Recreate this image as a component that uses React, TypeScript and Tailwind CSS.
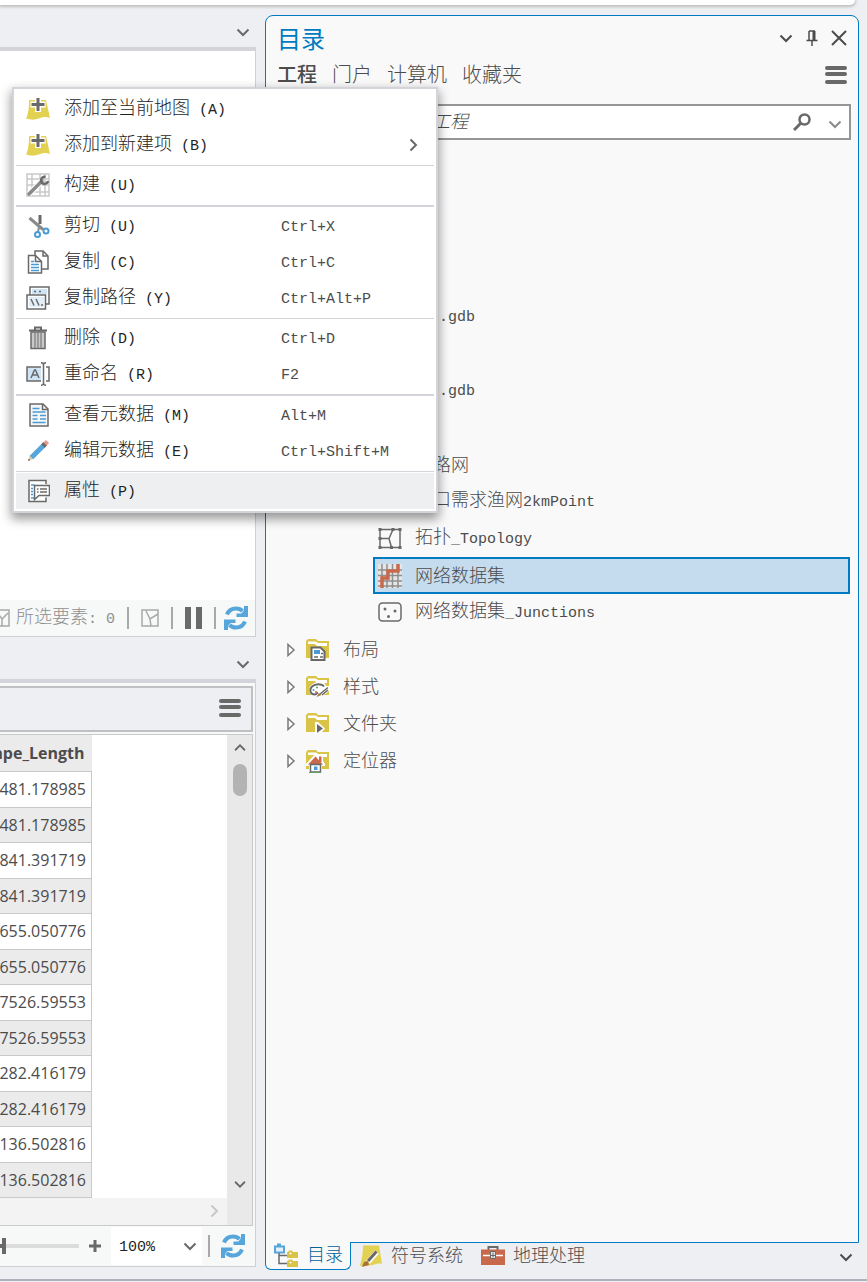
import React from 'react';

const CJK = "font-['Liberation_Sans','Noto_Sans_CJK_SC',sans-serif]";

// Latin runs are set in a half-width mono so they line up with the CJK grid
const Mixed: React.FC<{ text: string }> = ({ text }) => (
  <span className="whitespace-pre">
    {text.split(/([\x20-\x7e]+)/).map((part, i) =>
      i % 2 === 1 ? (
        <span key={i} className="font-['Liberation_Mono',monospace] text-[15px]">
          {part}
        </span>
      ) : (
        part
      )
    )}
  </span>
);

const Chevron: React.FC<{ className?: string }> = ({ className = '' }) => (
  <svg width="14" height="14" viewBox="0 0 14 14" fill="none" stroke="currentColor" strokeWidth="2" className={className}>
    <path d="M1.500 4.500 7 10l5.500-5.500" />
  </svg>
);

const Hamburger = () => (
  <svg width="22" height="20" viewBox="0 0 22 20" fill="#696969">
    <rect y="1" width="22" height="4" rx="2" />
    <rect y="7" width="22" height="4" rx="2" />
    <rect y="15" width="22" height="4" rx="2" />
  </svg>
);

const Refresh = () => (
  <svg width="24" height="24" viewBox="0 0 24 24">
    <path d="M3 8.500C5 3.500 9 2.500 12 2.500c3.500 0 5.500 1.500 6.500 2.500" fill="none" stroke="#56a5db" strokeWidth="4" />
    <path d="M24 0v11H12.500V7.500h5L20 4V0z" fill="#56a5db" />
    <path d="M21 15.500c-2 5-6 6-9 6-3.500 0-5.500-1.500-6.500-2.500" fill="none" stroke="#56a5db" strokeWidth="4" />
    <path d="M0 24V13.500h11.500V17h-5L4 20v4z" fill="#56a5db" />
  </svg>
);

const Ico: React.FC<{ children: React.ReactNode }> = ({ children }) => (
  <svg width="24" height="24" viewBox="0 0 24 24" fill="none" className="shrink-0">
    {children}
  </svg>
);

const AddMapIcon = () => (
  <Ico>
    <path d="M3 3h17l4 18c-4-1.500-7-1-11 .5S4 23 0 21.500C2.500 17 3 10 3 3z" fill="#e3d152" />
    <path d="M9 0h6v4.500h4.500v6H15V15H9v-4.500H4.500v-6H9z" fill="#fff" />
    <path d="M10.500 1h3v5h5v3h-5v5h-3V9h-5V6h5z" fill="#696969" />
  </Ico>
);

const BuildIcon = () => (
  <Ico>
    <path d="M1 1h22v22H1zM6 1v22M14 1v22M19 1v22M1 6h22M1 12h22M1 19h22" stroke="#c9c9c9" strokeWidth="1.500" />
    <path d="M3 21 16 8" stroke="#fff" strokeWidth="6" />
    <path d="M3 21 16 8" stroke="#8a8a8a" strokeWidth="3.500" strokeLinecap="round" />
    <path d="M19.500 4a3.500 3.500 0 1 0 2.500 4" stroke="#696969" strokeWidth="2.500" />
  </Ico>
);

const CutIcon = () => (
  <Ico>
    <path d="M3.500 4 17 15.500" stroke="#8a8a8a" strokeWidth="3" />
    <path d="M14 1v9" stroke="#696969" strokeWidth="3" />
    <path d="m13 13-1 5" stroke="#8a8a8a" strokeWidth="2" />
    <circle cx="11.500" cy="20.500" r="2.500" stroke="#4a9bd5" strokeWidth="2" />
    <circle cx="20" cy="17" r="2.500" stroke="#4a9bd5" strokeWidth="2" />
  </Ico>
);

const CopyIcon = () => (
  <Ico>
    <path d="M9 1h8l5 5v13H9z" fill="#fff" stroke="#696969" strokeWidth="1.500" />
    <path d="M17 1v5h5" stroke="#696969" strokeWidth="1.500" />
    <path d="M2.500 5.500h7l6 6V23h-13z" fill="#fff" stroke="#696969" strokeWidth="1.500" />
    <path d="M9.500 5.500v6h6" stroke="#696969" strokeWidth="1.500" />
    <path d="M5 11.500h3M5 14.500h8M5 17.500h8M5 20.500h8" stroke="#4a9bd5" strokeWidth="1.500" />
  </Ico>
);

const CopyPathIcon = () => (
  <Ico>
    <path d="M4 1h19v17H4z" fill="#fff" stroke="#696969" strokeWidth="1.500" />
    <path d="M6 3h15v5H6z" fill="#cfe5f5" />
    <path d="M8 5.500h2M13 5.500h2" stroke="#696969" strokeWidth="1.500" />
    <path d="M1 9h18.500v14H1z" fill="#fff" stroke="#696969" strokeWidth="1.500" />
    <path d="M3 11h15v10H3z" fill="#e0eff9" />
    <path d="m5 13 3 6.500M10 13l3 6.500M15 19h2" stroke="#696969" strokeWidth="1.500" />
  </Ico>
);

const DeleteIcon = () => (
  <Ico>
    <path d="M3 4.500h18M9 4V1.500h6V4" stroke="#696969" strokeWidth="2" />
    <path d="M5 6h14v16.500H5z" fill="#c9c9c9" stroke="#696969" strokeWidth="1.500" />
    <path d="M9 7v15M12 7v15M15 7v15" stroke="#8a8a8a" strokeWidth="1.500" />
  </Ico>
);

const RenameIcon = () => (
  <Ico>
    <path d="M15 5H1v14h14" fill="#cfe5f5" stroke="#696969" strokeWidth="1.500" />
    <path d="m5 16 3.500-8h1l3.500 8M6 13h6" stroke="#696969" strokeWidth="1.500" />
    <path d="M20 5h3v14h-3" stroke="#696969" strokeWidth="1.500" />
    <path d="M15 .7c2 0 2.500.8 2.500 2 0-1.200.5-2 2.500-2M17.500 2v20M15 23.300c2 0 2.500-.8 2.500-2 0 1.200.5 2 2.500 2" stroke="#696969" strokeWidth="1.500" />
  </Ico>
);

const MetadataIcon = () => (
  <Ico>
    <path d="M4 1h13l5 5v17H4z" fill="#f6f6f6" stroke="#696969" strokeWidth="1.500" />
    <path d="M16.500 1v5.500H22" stroke="#696969" strokeWidth="1.500" />
    <path d="M6.500 5.500h7M6.500 9h13M6.500 12.500h5M14 12.500h6M6.500 16h5M14 16h6M6.500 19.500h13" stroke="#4a9bd5" strokeWidth="1.500" />
  </Ico>
);

const EditIcon = () => (
  <Ico>
    <path d="m2 22 2-6 3.500 4z" fill="#e0cba8" />
    <path d="m2 22 .8-2.500 1.500 1.700z" fill="#696969" />
    <path d="M5.500 18.500 18 6" stroke="#56a5db" strokeWidth="5" />
    <path d="m17 7 2.500-2.500" stroke="#696969" strokeWidth="5" />
    <path d="m19 5 2.500-2.500" stroke="#e49a8c" strokeWidth="4.500" />
  </Ico>
);

const PropertiesIcon = () => (
  <Ico>
    <path d="M20 5V1.500H3v21h17v-4" fill="#fff" stroke="#696969" strokeWidth="1.500" />
    <path d="M5 6h3.500M5 9.500h2M5 12.500h2M5 15.500h2M5 19h4" stroke="#4a9bd5" strokeWidth="1.500" />
    <path d="M8.500 6.500h15v10H13l-4.500 4z" fill="#fff" stroke="#696969" strokeWidth="1.500" />
    <path d="M11 10h1.500M14 10h7M11 13h1.500M14 13h7" stroke="#696969" strokeWidth="1.500" />
  </Ico>
);

const TopologyIcon = () => (
  <Ico>
    <path d="M2 2.500h20v18H2zM2 11.500h9l4-9M11 11.500l2.500 9" stroke="#696969" strokeWidth="1.500" />
    <path d="M.5 1h3v3h-3zM13.500 1h3v3h-3zM20.500 1h3v3h-3zM.5 19h3v3h-3zM12 19h3v3h-3zM20.500 19h3v3h-3zM.5 10h3v3h-3z" fill="#696969" />
  </Ico>
);

const NetworkIcon = () => (
  <Ico>
    <path d="M0 0h24v24H0z" fill="#e6e6e6" />
    <path d="M4 0v24M9 0v24M14.500 0v24M20 0v24M0 6h24M0 11.500h24M0 17h24M0 22h24" stroke="#8f8f8f" strokeWidth="1.500" />
    <path d="M4 24V14h6V7h10V0" stroke="#c9694c" strokeWidth="3.500" />
  </Ico>
);

const JunctionsIcon = () => (
  <Ico>
    <rect x="1" y="2" width="22" height="18" rx="3.500" stroke="#696969" strokeWidth="1.500" />
    <circle cx="7" cy="8" r="1.500" fill="#696969" />
    <circle cx="17" cy="10" r="1.500" fill="#696969" />
    <circle cx="10.500" cy="15.500" r="1.500" fill="#696969" />
  </Ico>
);

const FolderIcon: React.FC<{ children?: React.ReactNode }> = ({ children }) => (
  <Ico>
    <path d="M0 20V3l2-2h8l2 2h11v17z" fill="#d9c447" />
    <path d="M2 6V3.500h8L12 5h9v3H11L9 6z" fill="#fff" />
    {children}
  </Ico>
);

const LayoutFolderIcon = () => (
  <FolderIcon>
    <path d="M5.500 9.500h9l4 4V22h-13z" fill="#fff" stroke="#696969" strokeWidth="2" />
    <path d="M8 12h6v4H8z" fill="#4a9bd5" />
    <path d="M15 15.500h2M8 19h4M14 19h3" stroke="#696969" strokeWidth="1.500" />
  </FolderIcon>
);

const StyleFolderIcon = () => (
  <FolderIcon>
    <path d="M4 15c0-4 4-7 9-7 4 0 6 2 6 4h5c0 3-6 7-9 8-5 1-11 0-11-5z" fill="#fff" stroke="#fff" strokeWidth="2" />
    <path d="M18 11.500c-2-3-9-3-12 0-3 3-2 8 3 8 2 0 2-1.500 3-2" stroke="#696969" strokeWidth="1.800" />
    <circle cx="7.500" cy="15" r="1" fill="#4a9bd5" />
    <circle cx="11" cy="12.500" r="1" fill="#5aa469" />
    <circle cx="10" cy="17" r="1" fill="#c9694c" />
    <path d="m14 19 8-6.500M16 20l6-5" stroke="#696969" strokeWidth="1.500" />
    <path d="m10.500 22 2.500-4 2.500 2z" fill="#a9713d" />
  </FolderIcon>
);

const FilesFolderIcon = () => (
  <FolderIcon>
    <path d="M9 10h3l7 6.500-5 5.500H9z" fill="#fff" />
    <path d="M11 12v9l6-4.500z" fill="#696969" />
  </FolderIcon>
);

const LocatorFolderIcon = () => (
  <FolderIcon>
    <path d="M10 4 0 15v2h3v7h13v-7h3v-2l-2-3V6h-4v1z" fill="#fff" />
    <path d="M13 7.500h2.500V13H13z" fill="#c9694c" />
    <path d="M9.500 7.500 2 15.500h15z" fill="#c9694c" />
    <path d="M4.500 15.500h10V23h-10z" fill="#fff" stroke="#696969" strokeWidth="1.500" />
    <path d="M8 17.500h3.500V21H8z" fill="#4a9bd5" />
    <path d="M3 23.500h12" stroke="#5aa469" />
  </FolderIcon>
);

const CatalogTabIcon = () => (
  <Ico>
    <path d="M0 2.500h3V.500h4v2h4v8H0z" fill="#56a5db" />
    <path d="M2 4.500h7v4H2z" fill="#e4f1fa" />
    <path d="M5 10v10.500h8M5 12.500h8" stroke="#696969" strokeWidth="1.500" />
    <path d="M13 9h1l1-1.500h3l1 1.500h5v6H13zM13 18h1l1-1.500h3l1 1.500h5v6H13z" fill="#d9c447" />
    <circle cx="16.500" cy="10.500" r="1" fill="#fff" />
    <circle cx="16.500" cy="19.500" r="1" fill="#fff" />
  </Ico>
);

const SymbologyTabIcon = () => (
  <Ico>
    <path d="M4 1.500h16L23 20c-5-1.500-8 1.500-12 1.500S4 23 1 21.500c2-6 3-13 3-20z" fill="#e3d152" />
    <path d="m9 18 9-10" stroke="#fff" strokeWidth="5" />
    <path d="m9 17 8.500-9.500" stroke="#696969" strokeWidth="3" />
    <path d="m3 23 2-5 4-1 1 4z" fill="#a9713d" />
  </Ico>
);

const GeoprocessingTabIcon = () => (
  <Ico>
    <path d="M7.500 6V3h9v3" stroke="#696969" strokeWidth="2" />
    <path d="M0 5.500h24V21H0z" fill="#c9694c" />
    <path d="M2 11.500h20" stroke="#fff" strokeWidth="1.500" />
    <path d="M9.500 7.500h5v7h-5z" fill="#e6e6e6" stroke="#696969" />
    <path d="M12 8.500v5M10 11.500h4" stroke="#696969" />
  </Ico>
);

interface MenuEntry {
  label: string;
  icon: React.FC;
  shortcut?: string;
  submenu?: boolean;
  active?: boolean;
}

const menuGroups: MenuEntry[][] = [
  [
    { label: '添加至当前地图 (A)', icon: AddMapIcon },
    { label: '添加到新建项 (B)', icon: AddMapIcon, submenu: true },
  ],
  [{ label: '构建 (U)', icon: BuildIcon }],
  [
    { label: '剪切 (U)', icon: CutIcon, shortcut: 'Ctrl+X' },
    { label: '复制 (C)', icon: CopyIcon, shortcut: 'Ctrl+C' },
    { label: '复制路径 (Y)', icon: CopyPathIcon, shortcut: 'Ctrl+Alt+P' },
  ],
  [
    { label: '删除 (D)', icon: DeleteIcon, shortcut: 'Ctrl+D' },
    { label: '重命名 (R)', icon: RenameIcon, shortcut: 'F2' },
  ],
  [
    { label: '查看元数据 (M)', icon: MetadataIcon, shortcut: 'Alt+M' },
    { label: '编辑元数据 (E)', icon: EditIcon, shortcut: 'Ctrl+Shift+M' },
  ],
  [{ label: '属性 (P)', icon: PropertiesIcon, active: true }],
];

const ContextMenu = () => (
  <div
    role="menu"
    className="absolute left-3 top-[87px] z-10 w-[426px] border-2 border-[#d3d4da] bg-white p-[2px] text-[#1f1f1f] shadow-[0_5px_10px_1px_rgba(0,0,0,0.4)]"
  >
    {menuGroups.map((group, g) => (
      <React.Fragment key={g}>
        {g > 0 && <hr className={`mt-[2px] mb-px border-0 bg-[#d3d4da] ${g === 2 || g === 4 ? 'h-[2px]' : 'h-px'}`} />}
        {group.map((item) => (
          <button
            key={item.label}
            role="menuitem"
            className={`flex h-9 w-full items-center pl-[10px] pr-[14px] text-left ${item.active ? 'bg-[#eeeff1]' : ''}`}
          >
            <item.icon />
            <span className="ml-[14px] w-[217px]">
              <Mixed text={item.label} />
            </span>
            {item.shortcut && (
              <span className="text-[#4c4c4c]">
                <Mixed text={item.shortcut} />
              </span>
            )}
            {item.submenu && <Chevron className="ml-auto -rotate-90 text-[#696969]" />}
          </button>
        ))}
      </React.Fragment>
    ))}
  </div>
);

const Divider = () => <span className="h-[22px] w-[2px] shrink-0 bg-[#a8a8a8]" />;

const PaneHeader = () => (
  <div className="flex h-[46px] items-center justify-end border-b-4 border-[#d3d4da] pr-[6px] pt-3">
    <button aria-label="窗格选项" className="text-[#696969]">
      <Chevron />
    </button>
  </div>
);

const MapPane = () => (
  <section>
    <PaneHeader />
    <div className="h-[549px] border-r border-[#cfd0d4] bg-white" />
    <div className="flex h-[37px] items-center justify-end gap-3 border-b border-r border-[#cfd0d4] bg-[#f7f8f8] pr-[7px]">
      <div className="flex shrink-0 items-center gap-[6px] text-[#8f8f8f]">
        <svg width="18" height="18" viewBox="0 0 18 18" fill="none" stroke="#a8a8a8" strokeWidth="1.500">
          <path d="M1 1h16v16H1zM4 2l6 8 6-6M10 10v7" />
        </svg>
        <Mixed text="所选要素: 0" />
      </div>
      <Divider />
      <button aria-label="选择" className="shrink-0">
        <svg width="18" height="18" viewBox="0 0 18 18" fill="none" stroke="#a8a8a8" strokeWidth="1.500">
          <path d="M1 1h16v16H1zM5 2l4 8 8-5M9 10l1 7" />
        </svg>
      </button>
      <Divider />
      <button aria-label="暂停" className="flex shrink-0 gap-[5px]">
        <span className="h-[22px] w-[6px] bg-[#696969]" />
        <span className="h-[22px] w-[6px] bg-[#696969]" />
      </button>
      <Divider />
      <button aria-label="刷新" className="-ml-1 shrink-0">
        <Refresh />
      </button>
    </div>
  </section>
);

const lengths = [
  '7481.178985',
  '7481.178985',
  '3841.391719',
  '3841.391719',
  '7655.050776',
  '7655.050776',
  '57526.59553',
  '57526.59553',
  '1282.416179',
  '1282.416179',
  '5136.502816',
  '5136.502816',
];

const TablePane = () => (
  <section>
    <PaneHeader />
    <div className="border-b border-r border-[#cfd0d4] bg-[#f7f8f8] pt-[3px]">
      <div className="mr-[2px] flex h-[46px] items-center justify-end border-y-2 border-r-2 border-[#c0c0c3] bg-[#eeeff2] pb-[2px] pr-[10px]">
        <button aria-label="菜单">
          <Hamburger />
        </button>
      </div>
      <div className="mr-[2px] mt-[2px] flex border-y border-r border-[#c9c9cb] bg-white">
        <div className="flex-1">
          <div className="flex w-[92px] justify-end overflow-hidden">
            <table className="w-[150px] shrink-0 border-collapse text-right font-['Open_Sans',sans-serif] text-[16px] font-normal text-[#4c4c4c]">
              <thead>
                <tr className="h-[36px] bg-[#ebebeb]">
                  <th className="py-0 pl-0 pr-[7px] font-bold">Shape_Length</th>
                </tr>
              </thead>
              <tbody>
                {lengths.map((value, i) => (
                  <tr key={i} className={i % 2 ? 'h-[35px] bg-[#ebebeb]' : 'h-[36px] bg-white'}>
                    <td className="border-y border-r border-[#c9c9cb] py-0 pl-0 pr-[5px]">{value}</td>
                  </tr>
                ))}
              </tbody>
            </table>
          </div>
          <div className="flex h-[27px] items-center justify-end bg-[#f3f3f3] pr-[6px] text-[#c8c8c8]">
            <Chevron className="-rotate-90" />
          </div>
        </div>
        <div className="flex w-[25px] flex-col items-center bg-[#e9e9e9] pt-[6px] pb-[34px] text-[#696969]">
          <Chevron className="rotate-180 scale-90" />
          <span className="mt-[9px] h-8 w-[14px] rounded-full bg-[#b3b3b3]" />
          <Chevron className="mt-auto scale-90" />
        </div>
      </div>
      <div className="flex h-10 items-center">
        <input
          type="range"
          aria-label="缩放"
          defaultValue={3}
          className="h-1 w-[79px] appearance-none bg-[linear-gradient(to_right,#696969_3px,#dcdcdc_3px)] [&::-webkit-slider-thumb]:h-4 [&::-webkit-slider-thumb]:w-1 [&::-webkit-slider-thumb]:appearance-none [&::-webkit-slider-thumb]:bg-[#696969]"
        />
        <button aria-label="放大" className="ml-[10px]">
          <svg width="12" height="12" viewBox="0 0 12 12" stroke="#696969" strokeWidth="3">
            <path d="M6 0v12M0 6h12" />
          </svg>
        </button>
        <div className="relative ml-[10px] h-[38px] w-[91px] bg-white">
          <select
            aria-label="缩放比例"
            className="h-full w-full appearance-none pl-2 pt-1 font-['Liberation_Mono',monospace] text-[15px] text-[#1f1f1f]"
          >
            <option>100%</option>
          </select>
          <Chevron className="pointer-events-none absolute right-[5px] top-3 text-[#696969]" />
        </div>
        <div className="ml-[6px] flex items-center gap-[11px]">
          <Divider />
          <button aria-label="刷新">
            <Refresh />
          </button>
        </div>
      </div>
    </div>
  </section>
);

interface TreeItem {
  label: string;
  icon?: React.FC;
  indent: string;
  expandable?: boolean;
  selected?: boolean;
}

const treeItems: TreeItem[] = [
  { label: '.gdb', indent: 'pl-[173px]' },
  { label: '', indent: '' },
  { label: '.gdb', indent: 'pl-[173px]' },
  { label: '', indent: '' },
  { label: '路网', indent: 'pl-[167px]' },
  { label: '口需求渔网2kmPoint', indent: 'pl-[167px]' },
  { label: '拓扑_Topology', icon: TopologyIcon, indent: 'pl-[112px]' },
  { label: '网络数据集', icon: NetworkIcon, indent: 'pl-[3px]', selected: true },
  { label: '网络数据集_Junctions', icon: JunctionsIcon, indent: 'pl-[112px]' },
  { label: '布局', icon: LayoutFolderIcon, indent: 'pl-5', expandable: true },
  { label: '样式', icon: StyleFolderIcon, indent: 'pl-5', expandable: true },
  { label: '文件夹', icon: FilesFolderIcon, indent: 'pl-5', expandable: true },
  { label: '定位器', icon: LocatorFolderIcon, indent: 'pl-5', expandable: true },
];

const CatalogTree = () => (
  <ul role="tree" className="mt-[158px] pr-2 text-[#4c4c4c]">
    {treeItems.map((item, i) => (
      <li
        key={i}
        role="treeitem"
        aria-selected={!!item.selected}
        className={`flex h-[37px] items-center ${item.indent} ${
          item.selected ? 'ml-[107px] border-2 border-[#007ac2] bg-[#c5dbee]' : ''
        }`}
      >
        {item.expandable && (
          <svg width="10" height="14" viewBox="0 0 10 14" fill="#fff" stroke="#7a7a7a" strokeWidth="1.500" className="mr-[10px]">
            <path d="M2 1.500v11L8 7z" />
          </svg>
        )}
        {item.icon && (
          <span className="mr-[13px]">
            <item.icon />
          </span>
        )}
        <Mixed text={item.label} />
      </li>
    ))}
  </ul>
);

const CatalogPanel = () => (
  <section className="flex flex-1 flex-col pl-[9px] pr-2 pt-[10px]">
    <div className="flex-1 rounded-t-lg border border-[#007ac2] bg-[#f9f9f9]">
      <div className="flex h-11 items-center justify-between pl-[11px] pr-[11px]">
        <h1 className="pt-1 text-[24px] font-normal text-[#007ac2]">目录</h1>
        <div className="flex items-center gap-3 text-[#4c4c4c]">
          <button aria-label="选项">
            <Chevron />
          </button>
          <button aria-label="固定">
            <svg width="14" height="16" viewBox="0 0 14 16" fill="none" stroke="currentColor" strokeWidth="1.500">
              <path d="M4 1v9M4 1h6M1.500 10.500h11M7 10.500V16" />
              <path d="M9 1v9" strokeWidth="3" />
            </svg>
          </button>
          <button aria-label="关闭">
            <svg width="16" height="16" viewBox="0 0 16 16" stroke="currentColor" strokeWidth="2">
              <path d="m1 1 14 14M15 1 1 15" />
            </svg>
          </button>
        </div>
      </div>
      <div className="flex h-[30px] items-center justify-between pl-[11px] pr-[11px]">
        <nav className="flex gap-[15px] text-[20px] text-[#4c4c4c]">
          <button className="font-medium">工程</button>
          <button>门户</button>
          <button>计算机</button>
          <button>收藏夹</button>
        </nav>
        <button aria-label="菜单">
          <Hamburger />
        </button>
      </div>
      <div className="ml-[117px] mr-[7px] mt-[14px] flex h-9 items-center border-2 border-[#969696] bg-white pr-[7px]">
        <input
          type="text"
          aria-label="搜索工程"
          placeholder="搜索 工程"
          className="min-w-0 flex-1 pl-[6px] italic outline-none placeholder:text-[#4c4c4c]"
        />
        <button aria-label="搜索" className="mr-[17px]">
          <svg width="18" height="18" viewBox="0 0 18 18" fill="none" stroke="#696969">
            <circle cx="11.500" cy="6.500" r="5" strokeWidth="2.500" />
            <path d="m8 10-7 7" strokeWidth="3" />
          </svg>
        </button>
        <button aria-label="搜索选项" className="pt-1 text-[#8a8a8a]">
          <Chevron />
        </button>
      </div>
      <CatalogTree />
    </div>
    <div className="flex h-[27px] items-center text-[#4c4c4c]">
      <button className="-mt-px flex h-7 items-center gap-[9px] self-start rounded-b-md border border-t-0 border-[#007ac2] bg-[#f9f9f9] pb-[2px] pl-2 pr-[7px] text-[#00619b]">
        <CatalogTabIcon />
        目录
      </button>
      <button className="ml-2 flex items-center gap-2 pb-[2px]">
        <SymbologyTabIcon />
        符号系统
      </button>
      <button className="ml-[18px] flex items-center gap-2 pb-[2px]">
        <GeoprocessingTabIcon />
        地理处理
      </button>
      <button aria-label="更多窗格" className="ml-auto mr-[6px]">
        <Chevron />
      </button>
    </div>
  </section>
);

const App: React.FC = () => {
  return (
    <div className={`relative flex min-h-screen flex-col overflow-hidden bg-[#eeeff2] text-[18px] leading-6 font-light ${CJK}`}>
      <div className="mr-3 h-[5px] rounded-br-lg bg-white shadow-[0_1px_3px_1px_rgba(0,0,0,0.2)]" />
      <main className="flex flex-1 pb-[9px]">
        <div className="w-[256px] shrink-0">
          <MapPane />
          <TablePane />
        </div>
        <CatalogPanel />
      </main>
      <footer className="mb-px h-[2px] bg-[#b0b3bb]" />
      <ContextMenu />
    </div>
  );
};

export default App;
